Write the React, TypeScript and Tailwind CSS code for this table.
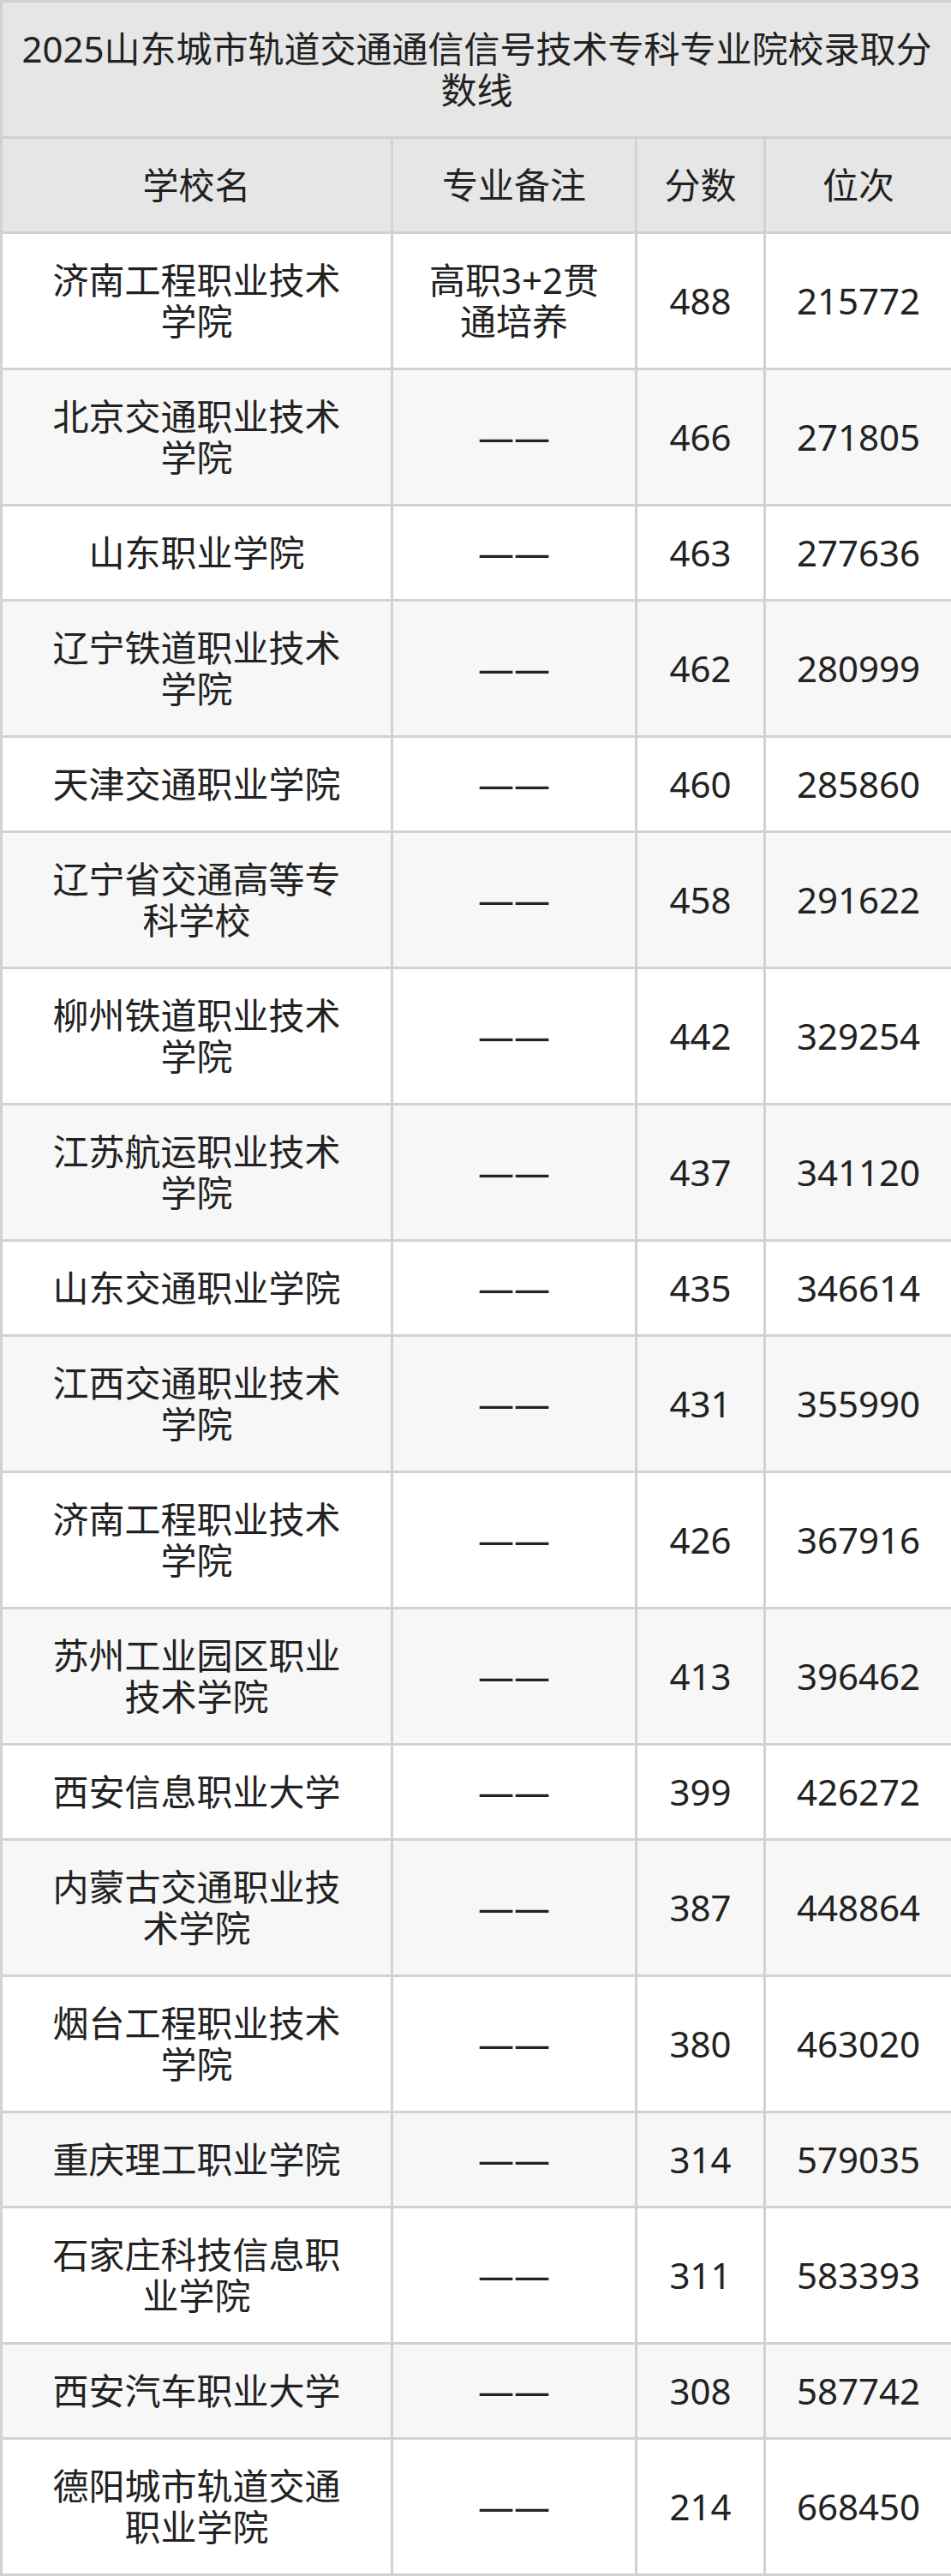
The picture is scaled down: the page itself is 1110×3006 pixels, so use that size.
const rows: [string, string, string, string][] = [
  ["济南工程职业技术学院", "高职3+2贯通培养", "488", "215772"],
  ["北京交通职业技术学院", "——", "466", "271805"],
  ["山东职业学院", "——", "463", "277636"],
  ["辽宁铁道职业技术学院", "——", "462", "280999"],
  ["天津交通职业学院", "——", "460", "285860"],
  ["辽宁省交通高等专科学校", "——", "458", "291622"],
  ["柳州铁道职业技术学院", "——", "442", "329254"],
  ["江苏航运职业技术学院", "——", "437", "341120"],
  ["山东交通职业学院", "——", "435", "346614"],
  ["江西交通职业技术学院", "——", "431", "355990"],
  ["济南工程职业技术学院", "——", "426", "367916"],
  ["苏州工业园区职业技术学院", "——", "413", "396462"],
  ["西安信息职业大学", "——", "399", "426272"],
  ["内蒙古交通职业技术学院", "——", "387", "448864"],
  ["烟台工程职业技术学院", "——", "380", "463020"],
  ["重庆理工职业学院", "——", "314", "579035"],
  ["石家庄科技信息职业学院", "——", "311", "583393"],
  ["西安汽车职业大学", "——", "308", "587742"],
  ["德阳城市轨道交通职业学院", "——", "214", "668450"],
];

const cell = "border-[3px] border-[#d2d2d2] py-[30px] text-center align-middle";

export default function App() {
  return (
    <div
      className="w-[1110px] bg-white text-[#222] text-[42px] leading-[48px]"
      style={{ fontFamily: '"Noto Sans", "Noto Sans CJK SC", sans-serif' }}
    >
      <table className="w-[1110px] border-collapse table-fixed">
        <colgroup>
          <col className="w-[456px]" />
          <col className="w-[285px]" />
          <col className="w-[150px]" />
          <col className="w-[219px]" />
        </colgroup>
        <thead>
          <tr className="bg-[#e6e6e6]">
            <th colSpan={4} className={`${cell} px-[10px] font-normal`}>
              2025山东城市轨道交通通信信号技术专科专业院校录取分数线
            </th>
          </tr>
          <tr className="bg-[#e6e6e6]">
            <th className={`${cell} px-[50px] font-normal`}>学校名</th>
            <th className={`${cell} px-[30px] font-normal`}>专业备注</th>
            <th className={`${cell} px-[4px] font-normal`}>分数</th>
            <th className={`${cell} px-[4px] font-normal`}>位次</th>
          </tr>
        </thead>
        <tbody>
          {rows.map((r, i) => (
            <tr key={i} className={i % 2 === 1 ? "bg-[#f7f7f7]" : "bg-white"}>
              <td className={`${cell} px-[50px]`}>{r[0]}</td>
              <td className={`${cell} px-[30px]`}>{r[1]}</td>
              <td className={`${cell} px-[4px]`}>{r[2]}</td>
              <td className={`${cell} px-[4px]`}>{r[3]}</td>
            </tr>
          ))}
        </tbody>
      </table>
    </div>
  );
}
